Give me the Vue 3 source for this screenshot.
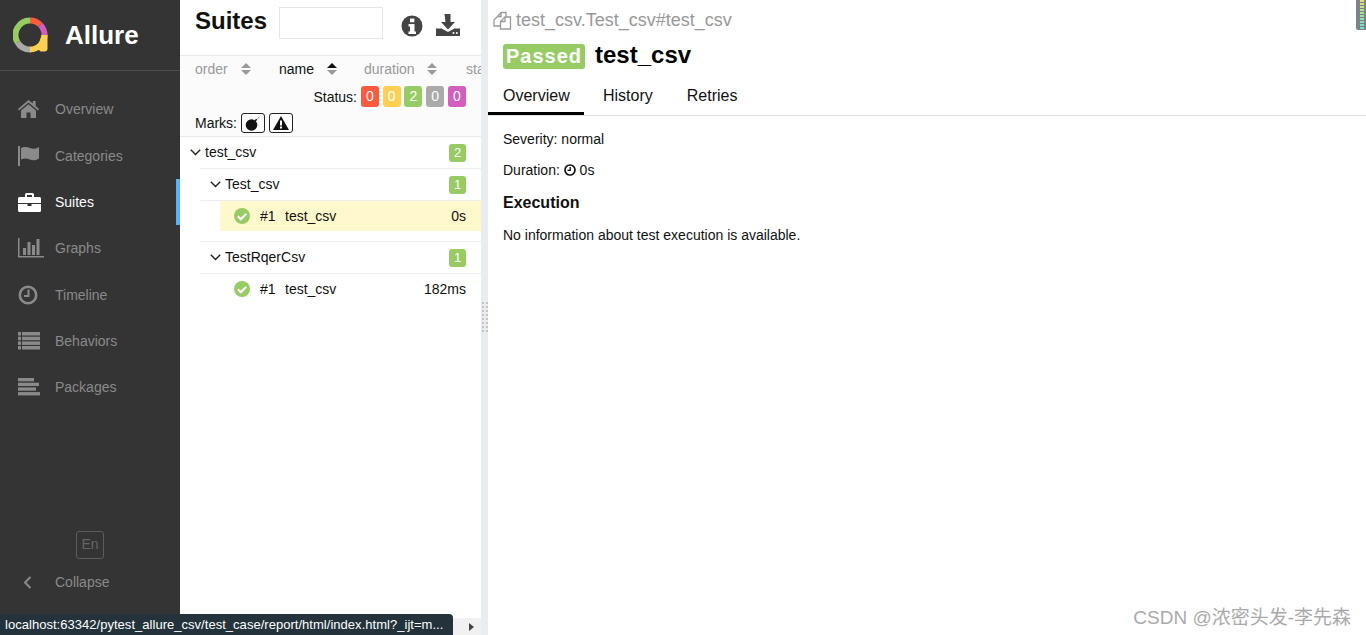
<script setup>
const nav = [
  { label: 'Overview', icon: 'home' },
  { label: 'Categories', icon: 'flag' },
  { label: 'Suites', icon: 'case', active: true },
  { label: 'Graphs', icon: 'chart' },
  { label: 'Timeline', icon: 'clock' },
  { label: 'Behaviors', icon: 'list' },
  { label: 'Packages', icon: 'bars' }
]
const sorts = [
  { label: 'order' },
  { label: 'name', active: true },
  { label: 'duration' },
  { label: 'status' }
]
const statuses = [
  { n: 0, c: '#fd5a3e' },
  { n: 0, c: '#ffd050' },
  { n: 2, c: '#97cc64' },
  { n: 0, c: '#aaaaaa' },
  { n: 0, c: '#d35ebe' }
]
const groups = [
  { name: 'Test_csv', time: '0s', selected: true },
  { name: 'TestRqerCsv', time: '182ms', selected: false }
]
const ticks = ['#e6df6a', '#d6e06e', '#c4e478', '#b0e684', '#a0e890', '#90e89c', '#84e8a8', '#78e6b4', '#70e4c0', '#6ce0c8']
</script>

<template>
  <div class="app">
    <aside class="side">
      <div class="brand">
        <svg class="logo" width="36" height="36" viewBox="0 0 36 36">
          <g fill="none" stroke-width="6">
            <path d="M17 3.5A14.5 14.5 0 0 1 27.25 7.75" stroke="#fd5a3e" />
            <path d="M27.25 7.75A14.5 14.5 0 0 1 31.5 18" stroke="#d35ebe" />
            <path d="M31.5 18A14.5 14.5 0 0 1 17 32.5" stroke="#ffd050" />
            <path d="M17 32.5A14.5 14.5 0 0 1 4.44 25.25" stroke="#aaaaaa" />
            <path d="M4.44 25.25A14.5 14.5 0 0 1 17 3.5" stroke="#97cc64" />
          </g>
          <path d="M28.5 18h6v13.5a3 3 0 0 1-3 3h-4l-3-3z" fill="#ffd050" />
        </svg>
        <span class="brand-name">Allure</span>
      </div>
      <nav class="menu">
        <a v-for="item in nav" :key="item.label" class="item" :class="{ on: item.active }">
          <span class="ico">
            <svg v-if="item.icon === 'home'" width="21" height="18" viewBox="0 0 21 18" fill="currentColor">
              <path d="M10.5 0 0 9l1 1.4L10.5 2.6 20 10.4 21 9l-3.4-2.9V1h-2.8v2.6z" />
              <path d="M10.5 4.2 3 10.4V18h5.5v-5.5h4V18H18v-7.6z" />
            </svg>
            <svg v-else-if="item.icon === 'flag'" width="23" height="20" viewBox="0 0 23 20" fill="currentColor">
              <rect x="0" y="0" width="2" height="20" />
              <path d="M3 2c3-1.6 6-1.2 9 0s6 1 9-1v11.500c-3 2-6 2.200-9 1s-6-1.400-9 0z" />
            </svg>
            <svg v-else-if="item.icon === 'case'" width="23" height="19" viewBox="0 0 23 19" fill="currentColor">
              <path d="M7 4V1.500A1.500 1.500 0 0 1 8.500 0h6A1.500 1.500 0 0 1 16 1.500V4h5.500A1.500 1.500 0 0 1 23 5.500V10H0V5.500A1.500 1.500 0 0 1 1.500 4zm2-2v2h5V2z" />
              <path d="M0 11h9.500v2h4v-2H23v6.500a1.500 1.500 0 0 1-1.500 1.500h-20A1.500 1.500 0 0 1 0 17.500z" />
            </svg>
            <svg v-else-if="item.icon === 'chart'" width="26" height="20" viewBox="0 0 26 20" fill="currentColor">
              <path d="M0 0h1.500v18H26v1.500H0z" />
              <rect x="5" y="10" width="3" height="7" />
              <rect x="9.500" y="4" width="3" height="13" />
              <rect x="14" y="7" width="3" height="10" />
              <rect x="18.500" y="1" width="3" height="16" />
            </svg>
            <svg v-else-if="item.icon === 'clock'" width="20" height="20" viewBox="0 0 20 20" fill="none" stroke="currentColor">
              <circle cx="10" cy="10" r="8.200" stroke-width="2.600" />
              <path d="M10.500 4.500v6.500H6" stroke-width="2" />
            </svg>
            <svg v-else-if="item.icon === 'list'" width="23" height="18" viewBox="0 0 23 18" fill="currentColor">
              <rect x="0" y="0" width="3" height="3.500" /><rect x="4" y="0" width="18" height="3.500" />
              <rect x="0" y="4.700" width="3" height="3.500" /><rect x="4" y="4.700" width="18" height="3.500" />
              <rect x="0" y="9.400" width="3" height="3.500" /><rect x="4" y="9.400" width="18" height="3.500" />
              <rect x="0" y="14" width="3" height="3.500" /><rect x="4" y="14" width="18" height="3.500" />
            </svg>
            <svg v-else width="23" height="18" viewBox="0 0 23 18" fill="currentColor">
              <rect x="0" y="0" width="16" height="3.300" />
              <rect x="0" y="4.700" width="21" height="3.300" />
              <rect x="0" y="9.400" width="18" height="3.300" />
              <rect x="0" y="14.100" width="22" height="3.300" />
            </svg>
          </span>
          <span>{{ item.label }}</span>
        </a>
      </nav>
      <div class="side-foot">
        <button class="lang">En</button>
        <div class="collapse">
          <svg class="chev" width="9" height="13" viewBox="0 0 9 13" fill="none" stroke="currentColor" stroke-width="2">
            <path d="M7.500 1 2 6.500 7.500 12" />
          </svg>
          <span>Collapse</span>
        </div>
      </div>
    </aside>

    <section class="list">
      <header class="list-head">
        <h2>Suites</h2>
        <input class="search" type="text" />
        <svg class="info" width="22" height="22" viewBox="0 0 22 22">
          <circle cx="11" cy="11" r="10.500" fill="#444" />
          <rect x="9" y="3.500" width="4.400" height="3.800" rx=".6" fill="#fff" />
          <path d="M7.500 9h6v7.500H15V19H7.500v-2.500H9V11.500H7.500z" fill="#fff" />
        </svg>
        <svg class="dl" width="24" height="22" viewBox="0 0 24 22" fill="#444">
          <path d="M8.500 0h6v8h4.500l-7 7.500-7-7.500h4.500z" />
          <path d="M0 14.500h5.500l6.500 3.500 6.500-3.500H24V22H0z" />
          <circle cx="17.500" cy="19" r="1" fill="#fff" />
          <circle cx="20.800" cy="19" r="1" fill="#fff" />
        </svg>
      </header>
      <div class="controls">
        <div class="sorts">
          <span v-for="s in sorts" :key="s.label" class="sort" :class="{ on: s.active }">
            {{ s.label }}
            <svg class="sort-ico" width="10" height="12" viewBox="0 0 10 12">
              <path d="M5 0l5 5H0z" :fill="s.active ? '#111' : '#999'" />
              <path d="M5 12 0 7h10z" fill="#999" />
            </svg>
          </span>
        </div>
        <div class="status">
          <span class="lbl">Status:</span>
          <span v-for="(st, i) in statuses" :key="i" class="chip" :style="{ background: st.c }">{{ st.n }}</span>
        </div>
        <div class="marks">
          <span class="lbl">Marks:</span>
          <button class="mark">
            <svg width="16" height="15" viewBox="0 0 16 15">
              <circle cx="6.500" cy="9" r="5.800" fill="#111" />
              <path d="M10 5l1.800-1.800" stroke="#111" stroke-width="1.600" />
              <path d="M12.500 2.500 14.500 .8" stroke="#888" stroke-width="1" />
            </svg>
          </button>
          <button class="mark">
            <svg width="16" height="14" viewBox="0 0 16 14">
              <path d="M8 0 16 14H0z" fill="#111" />
              <rect x="7" y="4.500" width="2" height="5" fill="#fff" />
              <rect x="7" y="10.500" width="2" height="2" fill="#fff" />
            </svg>
          </button>
        </div>
      </div>
      <div class="tree">
        <div class="row root">
          <svg class="tw" width="11" height="7" viewBox="0 0 11 7" fill="none" stroke="#222" stroke-width="1.400"><path d="M.8.8l4.700 4.700L10.200.8" /></svg>
          <span class="grow">test_csv</span>
          <span class="count">2</span>
        </div>
        <div v-for="g in groups" :key="g.name" class="group">
          <div class="row sub">
            <svg class="tw" width="11" height="7" viewBox="0 0 11 7" fill="none" stroke="#222" stroke-width="1.400"><path d="M.8.8l4.700 4.700L10.200.8" /></svg>
            <span class="grow">{{ g.name }}</span>
            <span class="count">1</span>
          </div>
          <div class="leaf" :class="{ sel: g.selected }">
            <svg class="ok" width="16" height="16" viewBox="0 0 16 16">
              <circle cx="8" cy="8" r="8" fill="#97cc64" />
              <path d="M3.800 8.200 6.800 11.200 12.300 5.700" fill="none" stroke="#fff" stroke-width="2.200" />
            </svg>
            <span class="num">#1</span>
            <span class="grow">test_csv</span>
            <span>{{ g.time }}</span>
          </div>
        </div>
      </div>
      <div class="hscroll">
        <svg width="5" height="8" viewBox="0 0 5 8"><path d="M0 0l5 4-5 4z" fill="#444" /></svg>
      </div>
    </section>

    <div class="gutter">
      <div class="grip">
        <i v-for="n in 16" :key="n"></i>
      </div>
    </div>

    <main class="detail">
      <div class="crumb">
        <svg width="19" height="19" viewBox="0 0 19 19" fill="none" stroke="#999" stroke-width="1.300">
          <path d="M4.500 5.500 8 1.500h5V6" />
          <path d="M4.500 5.500 1 9v6h6.500" />
          <path d="M8 1.500v4H4.500" />
          <path d="M12 6h5.500v12h-10v-7.500z" />
          <path d="M12 6v4.500H7.500" />
        </svg>
        <span>test_csv.Test_csv#test_csv</span>
      </div>
      <div class="title">
        <span class="passed">Passed</span>
        <span class="name">test_csv</span>
      </div>
      <div class="tabs">
        <a class="tab on">Overview</a>
        <a class="tab">History</a>
        <a class="tab">Retries</a>
      </div>
      <div class="body">
        <p>Severity: normal</p>
        <p class="dur">Duration:
          <svg width="12" height="12" viewBox="0 0 12 12" fill="none" stroke="#111">
            <circle cx="6" cy="6" r="5" stroke-width="1.700" />
            <path d="M6.200 3v3.400H3.500" stroke-width="1.300" />
          </svg>
          0s
        </p>
        <h3>Execution</h3>
        <p>No information about test execution is available.</p>
      </div>
    </main>

    <div class="statusbar">localhost:63342/pytest_allure_csv/test_case/report/html/index.html?_ijt=m...</div>
    <div class="watermark">CSDN @浓密头发-李先森</div>
    <div class="meter">
      <i v-for="(t, i) in ticks" :key="i" :style="{ background: t }"></i>
    </div>
  </div>
</template>

<style>
html, body { margin: 0; height: 100%; overflow: hidden; background: #fff; }
</style>

<style scoped>
.app {
  position: relative;
  display: flex;
  height: 635px;
  width: 1366px;
  overflow: hidden;
  font-family: "Liberation Sans", Arial, sans-serif;
  font-size: 14px;
  color: #111;
}

/* Sidebar */
.side {
  width: 180px;
  flex: none;
  display: flex;
  flex-direction: column;
  background: #343434;
  color: #8a8a8a;
}
.brand {
  height: 71px;
  box-sizing: border-box;
  border-bottom: 1px solid #4e4e4e;
  display: flex;
  align-items: center;
  padding-left: 13px;
  flex: none;
}
.logo { margin-right: 16px; }
.brand-name { color: #fff; font-size: 26px; font-weight: 700; }
.menu { padding-top: 15.2px; display: flex; flex-direction: column; }
.item {
  height: 46.33px;
  display: flex;
  align-items: center;
  padding-left: 18px;
  box-sizing: border-box;
}
.item.on { color: #fff; border-right: 4px solid #5bb0ee; }
.ico { width: 37px; flex: none; display: flex; align-items: center; }
.side-foot { margin-top: auto; padding-bottom: 42px; }
.lang {
  display: block;
  width: 28px;
  height: 28px;
  margin: 0 0 12px 76px;
  padding: 0 0 2px;
  background: transparent;
  border: 1px solid #5c5c5c;
  border-radius: 3px;
  color: #666;
  font: 14px "Liberation Sans", Arial, sans-serif;
}
.collapse { display: flex; align-items: center; padding-left: 23px; height: 22px; }
.chev { margin-right: 23px; }

/* Middle list */
.list {
  width: 301px;
  flex: none;
  display: flex;
  flex-direction: column;
  overflow: hidden;
  background: #fff;
}
.list-head {
  height: 55px;
  flex: none;
  box-sizing: border-box;
  display: flex;
  align-items: flex-start;
  padding-left: 15px;
}
h2 { margin: 6px 0 0; font-size: 24px; line-height: 30px; font-weight: 700; color: #111; }
.search {
  width: 104px;
  height: 32px;
  margin: 7px 0 0 12px;
  box-sizing: border-box;
  border: 1px solid #e3e6e8;
  background: #fff;
  padding: 0;
}
.info { margin: 15px 0 0 18px; }
.dl { margin: 14px 0 0 13px; }
.controls {
  height: 82px;
  flex: none;
  box-sizing: border-box;
  background: #fbfbfb;
  border-top: 1px solid #e9e9e9;
  border-bottom: 1px solid #e9e9e9;
  padding-left: 15px;
}
.sorts {
  display: grid;
  grid-template-columns: 84px 85px 102px 100px;
  height: 26px;
  align-items: center;
  white-space: nowrap;
  color: #999;
}
.sort.on { color: #111; }
.sort-ico { margin-left: 9px; vertical-align: -1px; }
.status {
  display: flex;
  justify-content: flex-end;
  align-items: center;
  height: 21px;
  margin-top: 4px;
  margin-right: 15px;
  gap: 3.8px;
}
.lbl { color: #111; }
.chip {
  width: 18px;
  height: 21px;
  line-height: 21px;
  border-radius: 3px;
  color: #fff;
  text-align: center;
}
.marks {
  display: flex;
  align-items: center;
  gap: 4px;
  height: 20px;
  margin-top: 6px;
}
.mark {
  width: 24px;
  height: 20px;
  padding: 0;
  box-sizing: border-box;
  background: #fff;
  border: 1px solid #222;
  border-radius: 3px;
  display: flex;
  align-items: center;
  justify-content: center;
}
.tree { flex: 1; }
.row {
  display: flex;
  align-items: center;
  height: 31px;
  padding-right: 15px;
}
.row .grow { margin-bottom: 2px; }
.root { padding-left: 10px; }
.sub {
  border-top: 1px solid #ececec;
  border-bottom: 1px solid #ececec;
  margin-left: 20px;
  padding-left: 10px;
}
.tw { margin-right: 4px; flex: none; }
.grow { flex: 1; }
.count {
  width: 17px;
  height: 18px;
  line-height: 18px;
  border-radius: 3px;
  background: #97cc64;
  color: #fff;
  font-size: 13px;
  text-align: center;
}
.group { padding-bottom: 10px; }
.group + .group { padding-bottom: 0; }
.leaf {
  display: flex;
  align-items: center;
  height: 30px;
  margin-left: 40px;
  padding: 0 15px 0 14px;
}
.leaf.sel { background: #fff8cc; }
.ok { margin-right: 9px; flex: none; }
.num { width: 26px; flex: none; margin-left: 1px; margin-right: -1px; }
.hscroll {
  height: 17px;
  flex: none;
  background: #f1f1f1;
  display: flex;
  align-items: center;
  justify-content: flex-end;
  padding-right: 7px;
}

/* Gutter */
.gutter {
  width: 7px;
  flex: none;
  background: #e9edf0;
  display: flex;
  align-items: center;
  justify-content: center;
}
.grip {
  display: grid;
  grid-template-columns: 2px 2px;
  gap: 2px;
  margin-top: -1px;
}
.grip i { width: 2px; height: 2px; background: #c4c4c4; }

/* Detail */
.detail { flex: 1; min-width: 0; background: #fff; }
.crumb {
  display: flex;
  align-items: center;
  gap: 4px;
  height: 20px;
  margin-top: 10px;
  padding-left: 5px;
  font-size: 18px;
  color: #999;
}
.title {
  display: flex;
  align-items: center;
  gap: 10px;
  height: 26px;
  margin-top: 13px;
  padding-left: 15px;
}
.passed {
  width: 82px;
  height: 25px;
  line-height: 25px;
  border-radius: 3px;
  background: #97cc64;
  color: #fff;
  font-size: 20px;
  font-weight: 700;
  letter-spacing: 1px;
  text-align: center;
}
.name { font-size: 24px; font-weight: 700; color: #000; margin-bottom: 2px; }
.tabs {
  display: flex;
  height: 35px;
  margin-top: 11px;
  border-bottom: 1px solid #e0e0e0;
  font-size: 16px;
}
.tab {
  padding: 0 15px 0 19px;
  line-height: 31px;
  height: 35px;
  box-sizing: border-box;
}
.tab:first-child { width: 96px; padding: 0 0 0 15px; border-bottom: 3px solid #000; }
.body { padding: 15px 15px 0; }
.body p { margin: 0; line-height: 17px; }
.dur { margin-top: 14px !important; }
.dur svg { vertical-align: -1px; }
h3 { margin: 14px 0 15px; font-size: 16px; line-height: 19px; font-weight: 700; color: #111; }

/* Overlays */
.statusbar {
  position: absolute;
  left: 0;
  bottom: 0;
  width: 453px;
  height: 21px;
  box-sizing: border-box;
  padding-left: 5px;
  line-height: 21px;
  background: #24323c;
  border-top-right-radius: 4px;
  color: #fff;
  font-size: 13px;
  letter-spacing: .03px;
  white-space: nowrap;
}
.watermark {
  position: absolute;
  right: 15px;
  bottom: 6px;
  font-family: "Liberation Sans", "Noto Sans CJK SC", sans-serif;
  font-size: 19px;
  color: #aaa;
}
.meter {
  position: absolute;
  top: 0;
  right: 0;
  width: 10px;
  height: 30px;
  box-sizing: border-box;
  background: #7d8188;
  padding: 0 2px 0 4px;
  display: flex;
  flex-direction: column;
  gap: 1px;
  border-bottom-left-radius: 2px;
}
.meter i { height: 2px; flex: none; }
</style>
